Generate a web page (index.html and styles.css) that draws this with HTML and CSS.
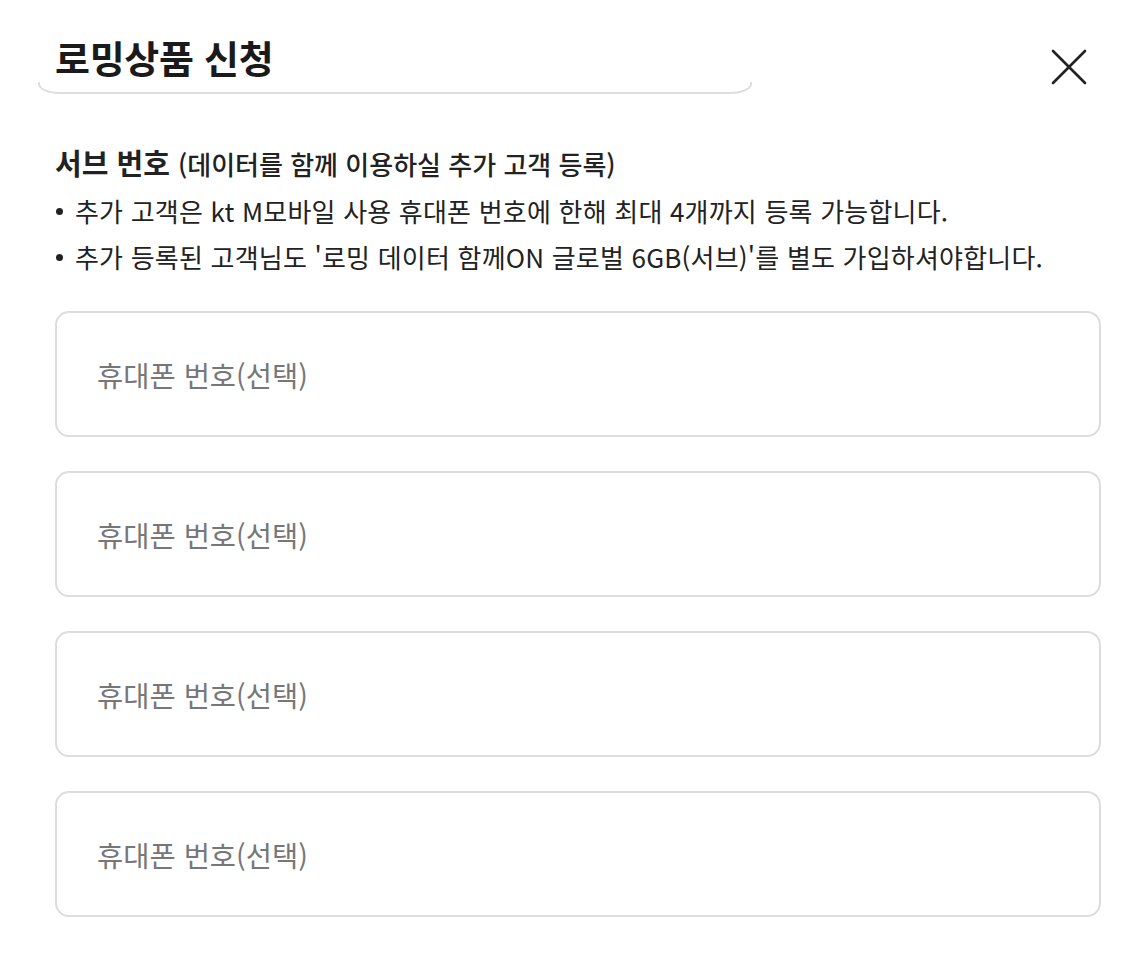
FILE: index.html
```
<!DOCTYPE html>
<html lang="ko">
<head>
  <meta charset="UTF-8" />
  <meta name="viewport" content="width=device-width, initial-scale=1.0"/>
  <title>로밍상품 신청</title>
  <link rel="stylesheet" href="styles.css">
</head>
<body>

  <div class="popup">
    <div class="peek"></div>

    <div class="popup-head">
      <h1>로밍상품 신청</h1>
      <button class="btn-close" aria-label="닫기">
        <svg width="36" height="36" viewBox="0 0 36 36">
          <path d="M2 2 L34 34 M34 2 L2 34" stroke="#222" stroke-width="2.6" stroke-linecap="round" fill="none"/>
        </svg>
      </button>
    </div>

    <div class="popup-body">
      <h3 class="sub-title">서브 번호 <span>(데이터를 함께 이용하실 추가 고객 등록)</span></h3>
      <ul class="notice">
        <li>추가 고객은 kt M모바일 사용 휴대폰 번호에 한해 최대 4개까지 등록 가능합니다.</li>
        <li>추가 등록된 고객님도 '로밍 데이터 함께ON 글로벌 6GB(서브)'를 별도 가입하셔야합니다.</li>
      </ul>

      <div class="phone-list">
        <input type="tel" class="phone" placeholder="휴대폰 번호(선택)">
        <input type="tel" class="phone" placeholder="휴대폰 번호(선택)">
        <input type="tel" class="phone" placeholder="휴대폰 번호(선택)">
        <input type="tel" class="phone" placeholder="휴대폰 번호(선택)">
      </div>
    </div>
  </div>

</body>
</html>
```

FILE: styles.css
```
body {
  margin: 0;
  background: #fff;
  font-family: "Noto Sans CJK KR", "Noto Sans", sans-serif;
  color: #222;
}
.popup {
  position: relative;
  padding: 0 47px 0 55px;
}
.peek {
  position: absolute;
  top: 82px;
  left: 38px;
  width: 710px;
  height: 10px;
  border: 2px solid #ddd;
  border-top: none;
  border-radius: 0 0 22px 22px / 0 0 10px 10px;
}
.popup-head {
  position: relative;
  display: flex;
  justify-content: space-between;
  align-items: center;
  height: 88px;
  padding-top: 24px;
  box-sizing: border-box;
}
.popup-head h1 {
  margin: 0;
  font-size: 38px;
  font-weight: 700;
  letter-spacing: -0.3px;
  color: #1a1a1a;
}
.btn-close {
  margin-right: 14px;
  margin-top: 22px;
  padding: 0;
  border: none;
  background: none;
  width: 36px;
  height: 36px;
}
.popup-body {
  padding-top: 54px;
}
.sub-title {
  margin: 0;
  font-size: 29px;
  font-weight: 700;
  line-height: 40px;
}
.sub-title span {
  font-size: 26px;
  font-weight: 500;
}
.notice {
  margin: 4px 0 0;
  padding: 0;
  list-style: none;
}
.notice li {
  position: relative;
  padding-left: 20px;
  font-size: 26px;
  line-height: 46px;
  letter-spacing: 0.2px;
}
.notice li::before {
  content: "";
  position: absolute;
  left: 1px;
  top: 20px;
  width: 7px;
  height: 7px;
  border-radius: 50%;
  background: #222;
}
.phone-list {
  display: flex;
  flex-direction: column;
  gap: 34px;
  margin-top: 31px;
}
.phone {
  height: 126px;
  box-sizing: border-box;
  padding: 0 40px;
  border: 2px solid #ddd;
  border-radius: 14px;
  font-family: inherit;
  font-size: 28.5px;
  outline: none;
}
.phone::placeholder {
  color: #777;
}
```
